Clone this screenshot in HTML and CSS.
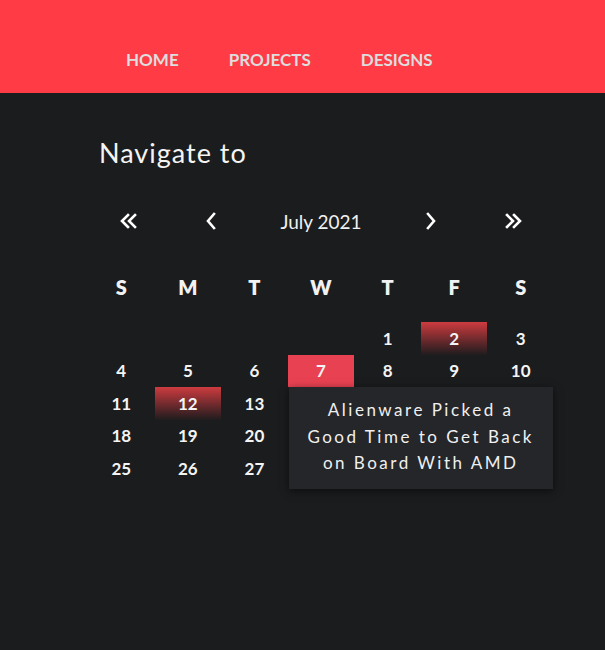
FILE: index.html
```html
<!DOCTYPE html>
<html lang="en">
<head>
<meta charset="utf-8">
<title>Navigate to</title>
<link rel="stylesheet" href="styles.css">
</head>
<body>
<header class="topbar">
  <nav class="menu">
    <a class="menu-link" href="#">HOME</a>
    <a class="menu-link" href="#">PROJECTS</a>
    <a class="menu-link" href="#">DESIGNS</a>
  </nav>
</header>
<main class="content">
  <h1 class="title">Navigate to</h1>
  <div class="calendar">
    <div class="cal-nav">
      <button class="nav-btn" aria-label="previous year">
        <svg width="20" height="18" viewBox="0 0 20 18"><path d="M9 3 L3 9 L9 15 M16 3 L10 9 L16 15" fill="none" stroke="#fff" stroke-width="2.6" stroke-linecap="square" stroke-linejoin="miter"/></svg>
      </button>
      <button class="nav-btn" aria-label="previous month">
        <svg width="14" height="18" viewBox="0 0 14 18"><path d="M10 2 L4 9 L10 16" fill="none" stroke="#fff" stroke-width="2.6" stroke-linecap="square"/></svg>
      </button>
      <div class="nav-label">July 2021</div>
      <button class="nav-btn" aria-label="next month">
        <svg width="14" height="18" viewBox="0 0 14 18"><path d="M4 2 L10 9 L4 16" fill="none" stroke="#fff" stroke-width="2.6" stroke-linecap="square"/></svg>
      </button>
      <button class="nav-btn" aria-label="next year">
        <svg width="20" height="18" viewBox="0 0 20 18"><path d="M4 3 L10 9 L4 15 M11 3 L17 9 L11 15" fill="none" stroke="#fff" stroke-width="2.6" stroke-linecap="square"/></svg>
      </button>
    </div>
    <div class="weekdays">
      <div>S</div><div>M</div><div>T</div><div>W</div><div>T</div><div>F</div><div>S</div>
    </div>
    <div class="days">
      <div class="day"></div><div class="day"></div><div class="day"></div><div class="day"></div>
      <div class="day">1</div><div class="day event">2</div><div class="day">3</div>
      <div class="day">4</div><div class="day">5</div><div class="day">6</div>
      <div class="day active">7
        <div class="tooltip">Alienware Picked a Good Time to Get Back on Board With AMD</div>
      </div>
      <div class="day">8</div><div class="day">9</div><div class="day">10</div>
      <div class="day">11</div><div class="day event">12</div><div class="day">13</div><div class="day covered">14</div><div class="day covered">15</div><div class="day covered">16</div><div class="day covered">17</div>
      <div class="day">18</div><div class="day">19</div><div class="day">20</div><div class="day covered">21</div><div class="day covered">22</div><div class="day covered">23</div><div class="day covered">24</div>
      <div class="day">25</div><div class="day">26</div><div class="day">27</div><div class="day covered">28</div><div class="day covered">29</div><div class="day covered">30</div><div class="day covered">31</div>
    </div>
  </div>
</main>
</body>
</html>
```
FILE: styles.css
```css
* { box-sizing: border-box; }
html, body { margin: 0; padding: 0; }
body {
  background: #1b1c1e;
  color: #f2f2f2;
  font-family: Lato, "Noto Sans", sans-serif;
  width: 605px;
  height: 650px;
  overflow: hidden;
}
.topbar {
  background: #ff3c45;
  height: 93px;
  display: flex;
  align-items: center;
}
.menu {
  display: flex;
  gap: 50px;
  padding-left: 126px;
  padding-top: 26px;
}
.menu-link {
  color: #dedede;
  text-decoration: none;
  font-weight: 700;
  font-size: 17px;
}
.content {
  padding: 44px 0 0 88px;
}
.title {
  margin: 0 0 0 11px;
  font-size: 27px;
  font-weight: 400;
  letter-spacing: 1px;
  color: #f4f4f4;
  line-height: 32px;
}
.calendar {
  width: 466px;
  margin-top: 32px;
}
.cal-nav {
  display: flex;
  align-items: center;
  height: 40px;
}
.nav-btn {
  width: 82px;
  height: 40px;
  background: none;
  border: 0;
  padding: 0;
  display: flex;
  align-items: center;
  justify-content: center;
}
.nav-label {
  flex: 1;
  text-align: center;
  font-size: 19px;
  color: #f0f0f0;
}
.weekdays {
  display: grid;
  grid-template-columns: repeat(7, 1fr);
  margin-top: 26px;
  height: 40px;
  align-items: center;
  text-align: center;
  font-weight: 800;
  font-size: 20px;
}
.days {
  display: grid;
  grid-template-columns: repeat(7, 1fr);
  grid-auto-rows: 32.5px;
  margin-top: 15px;
}
.day {
  position: relative;
  display: flex;
  align-items: center;
  justify-content: center;
  font-size: 17px;
  font-weight: 700;
  color: #f4f4f4;
}
.day.covered {
  visibility: hidden;
}
.day.event {
  background: linear-gradient(to bottom, #cd3b3f 0%, #5a2629 65%, #1f1c1e 100%);
}
.day.active {
  background: #e84252;
}
.tooltip {
  position: absolute;
  top: 100%;
  left: 1px;
  width: 264px;
  padding: 10px 16px 12px;
  background: #252629;
  box-shadow: 0 2px 8px rgba(0, 0, 0, 0.55);
  text-align: center;
  font-size: 17px;
  font-weight: 400;
  letter-spacing: 2.5px;
  line-height: 26.5px;
  color: #f0f0f0;
  z-index: 2;
  visibility: visible;
}
```
